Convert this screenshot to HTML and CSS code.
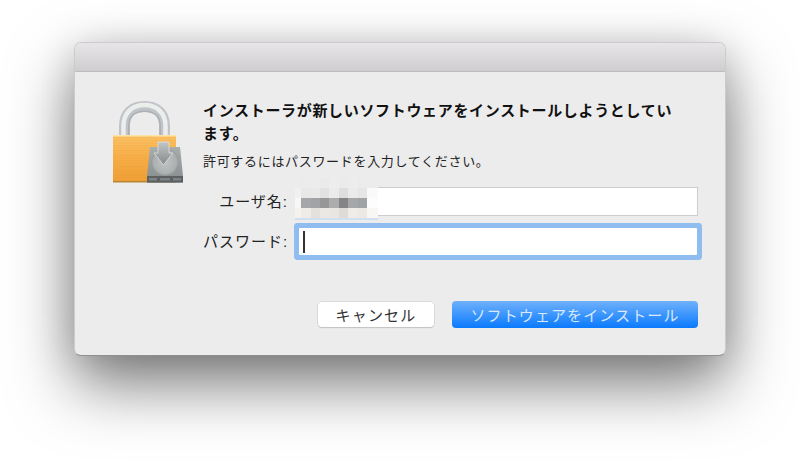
FILE: index.html
```html
<!DOCTYPE html>
<html lang="ja">
<head>
<meta charset="utf-8">
<title>インストーラ</title>
<link rel="stylesheet" href="styles.css">
</head>
<body>
<div class="window">
  <div class="titlebar"></div>
  <div class="content">
    <svg class="lock" width="72" height="86" viewBox="112 99 72 86" aria-hidden="true">
      <defs>
        <linearGradient id="body" x1="0" x2="0" y1="0" y2="1">
          <stop offset="0" stop-color="#fcc263"/>
          <stop offset=".5" stop-color="#f8ae48"/>
          <stop offset="1" stop-color="#ef9f33"/>
        </linearGradient>
        <pattern id="stripes" width="3" height="2.500" patternUnits="userSpaceOnUse">
          <rect width="3" height="1" fill="#d98a25" opacity=".14"/>
        </pattern>
        <linearGradient id="drive" x1="0" x2="0" y1="0" y2="1">
          <stop offset="0" stop-color="#a8adae"/>
          <stop offset="1" stop-color="#878c8e"/>
        </linearGradient>
        <linearGradient id="arrow" x1="0" x2="0" y1="0" y2="1">
          <stop offset="0" stop-color="#c2c5c6"/>
          <stop offset="1" stop-color="#85898a"/>
        </linearGradient>
        <radialGradient id="platter" cx=".5" cy=".5" r=".5">
          <stop offset="0" stop-color="#c0c4c5"/>
          <stop offset=".85" stop-color="#acb0b1"/>
          <stop offset="1" stop-color="#969a9b"/>
        </radialGradient>
        <filter id="soft" x="-10%" y="-10%" width="120%" height="120%">
          <feGaussianBlur stdDeviation=".7"/>
        </filter>
      </defs>
      <g class="shackle" fill="none">
        <path d="M124.500 137V126C124.500 113 133 106.500 144.500 106.500S164.500 113 164.500 126V137" stroke="#c0c3c7" stroke-width="11"/>
        <path d="M123.500 137V126C123.500 112 133 105 144.500 105S165.500 112 165.500 126V137" stroke="#eceded" stroke-width="4.500" filter="url(#soft)"/>
        <path d="M128.800 137V126C128.800 116 135 111.200 144.500 111.200S160.200 116 160.200 126V137" stroke="#acafb3" stroke-width="1.500" filter="url(#soft)"/>
      </g>
      <rect x="113" y="135.500" width="63" height="46.500" rx="1" fill="url(#body)"/>
      <rect x="113" y="135.500" width="63" height="46.500" fill="url(#stripes)"/>
      <rect x="113" y="135" width="63" height="1.500" fill="#fde3a6"/>
      <rect x="113" y="181" width="63" height="1.500" fill="#b98534"/>
      <path d="M150 147H180L183 176V182.500H147V176Z" fill="url(#drive)"/>
      <circle cx="165" cy="162" r="13.500" fill="url(#platter)"/>
      <path d="M147 176H183V182.500H147Z" fill="#5c6061"/>
      <rect x="149" y="178" width="8" height="2.500" fill="#7c8286"/>
      <rect x="160" y="178" width="10" height="2.500" fill="#7c8286"/>
      <rect x="173" y="178" width="8" height="2.500" fill="#7c8286"/>
      <path d="M158 142H169V153H173L163.500 165L154 153H158Z" fill="url(#arrow)" stroke="#dfe1e2" stroke-width=".8"/>
    </svg>
    <div class="main">
      <h1 class="title">インストーラが新しいソフトウェアをインストールしようとしています。</h1>
      <p class="subtitle">許可するにはパスワードを入力してください。</p>
      <div class="form">
        <label class="label">ユーザ名:</label>
        <div class="field">
          <svg class="mosaic" width="83" height="42" viewBox="0 0 83 42" aria-hidden="true">
            <g class="mosaic-cells">
              <rect x="0" y="0" width="83" height="40" fill="#ececec"/>
              <rect x="6" y="0" width="10" height="10" fill="#ebebeb"/><rect x="16" y="0" width="9" height="10" fill="#ececec"/><rect x="25" y="0" width="9" height="10" fill="#eaeaea"/><rect x="34" y="0" width="10" height="10" fill="#ededed"/><rect x="44" y="0" width="9" height="10" fill="#ebebeb"/><rect x="53" y="0" width="10" height="10" fill="#ededed"/><rect x="63" y="0" width="9" height="10" fill="#ebebeb"/><rect x="72" y="0" width="11" height="10" fill="#ececec"/>
              <rect x="0" y="10" width="6" height="10" fill="#f0f0f0"/><rect x="6" y="10" width="10" height="10" fill="#e8e8e8"/><rect x="16" y="10" width="9" height="10" fill="#e9e9e9"/><rect x="25" y="10" width="9" height="10" fill="#e2e2e2"/><rect x="34" y="10" width="10" height="10" fill="#ebebeb"/><rect x="44" y="10" width="9" height="10" fill="#dedede"/><rect x="53" y="10" width="10" height="10" fill="#ebebeb"/><rect x="63" y="10" width="9" height="10" fill="#e6e6e6"/><rect x="72" y="10" width="11" height="10" fill="#fafafa"/>
              <rect x="0" y="20" width="6" height="10" fill="#f6f8f8"/><rect x="6" y="20" width="10" height="10" fill="#a6a6a8"/><rect x="16" y="20" width="9" height="10" fill="#a2a3a6"/><rect x="25" y="20" width="9" height="10" fill="#979797"/><rect x="34" y="20" width="10" height="10" fill="#adadaf"/><rect x="44" y="20" width="9" height="10" fill="#848486"/><rect x="53" y="20" width="10" height="10" fill="#a6a7a9"/><rect x="63" y="20" width="9" height="10" fill="#a0a3a6"/><rect x="72" y="20" width="11" height="10" fill="#fdfdfd"/>
              <rect x="0" y="30" width="6" height="10" fill="#f5f1ec"/><rect x="6" y="30" width="10" height="10" fill="#efebe7"/><rect x="16" y="30" width="9" height="10" fill="#e3e0dd"/><rect x="25" y="30" width="9" height="10" fill="#ebe7e3"/><rect x="34" y="30" width="10" height="10" fill="#e9e5e1"/><rect x="44" y="30" width="9" height="10" fill="#dfdbd7"/><rect x="53" y="30" width="10" height="10" fill="#efebe7"/><rect x="63" y="30" width="9" height="10" fill="#ece8e4"/><rect x="72" y="30" width="11" height="10" fill="#f9f7f4"/>
              <rect x="0" y="40" width="83" height="2" fill="#cfe0f2"/>
            </g>
          </svg>
        </div>
        <label class="label">パスワード:</label>
        <div class="field field-focus"><span class="caret"></span></div>
      </div>
      <div class="buttons">
        <button class="btn btn-cancel">キャンセル</button>
        <button class="btn btn-primary">ソフトウェアをインストール</button>
      </div>
    </div>
  </div>
</div>
</body>
</html>
```

FILE: styles.css
```css
* { box-sizing: border-box; }

html, body { margin: 0; height: 100%; overflow: hidden; background: #fff; }

body {
  padding: 42px 0 0 74px;
  font-family: "Liberation Sans", "Noto Sans CJK JP", sans-serif;
  color: #222;
}

.window {
  width: 652px;
  height: 314px;
  background: #ececec;
  border: 1px solid #cbcbcb;
  border-bottom-color: #8f8f8f;
  border-radius: 7px;
  overflow: hidden;
  box-shadow: 0 28px 64px rgba(0, 0, 0, .52), 0 4px 36px rgba(0, 0, 0, .12);
}

.titlebar {
  height: 29px;
  background: linear-gradient(#e7e5e7, #cfcdcf);
  border-bottom: 1px solid #bdbdbd;
}

.content {
  display: flex;
  padding: 27px 27px 0 37px;
}

.lock { flex: none; margin-right: 19px; }

.main { flex: 1; min-width: 0; }

.title {
  margin: 0;
  width: 480px;
  font-size: 15px;
  line-height: 23px;
  font-weight: 700;
  letter-spacing: .67px;
  color: #111;
}

.subtitle {
  margin: 7px 0 0;
  font-size: 13px;
  line-height: 20px;
  letter-spacing: .68px;
  color: #222;
}

.form {
  display: grid;
  grid-template-columns: 85px 402px;
  column-gap: 8px;
  row-gap: 12px;
  margin-top: 15px;
  align-items: center;
}

.label {
  text-align: right;
  font-size: 15px;
  line-height: 22px;
  letter-spacing: 1px;
  white-space: nowrap;
  color: #222;
}

.field {
  position: relative;
  height: 29px;
  background: #fff;
  border: 1px solid #cdcdcd;
}

.field-focus {
  width: 398px;
  height: 27px;
  margin-left: 3px;
  border: none;
  box-shadow: 0 0 0 5px #8fbdf0;
  border-radius: 1px;
}

.caret {
  position: absolute;
  left: 4px;
  top: 3px;
  width: 2px;
  height: 22px;
  background: #333;
}

.mosaic {
  position: absolute;
  left: -2px;
  top: -10px;
}

.mosaic-cells { filter: blur(.6px); }

.buttons {
  display: flex;
  justify-content: flex-end;
  align-items: center;
  gap: 18px;
  width: 495px;
  margin-top: 46px;
}

.btn {
  border: none;
  padding: 0;
  font-family: inherit;
  font-size: 15px;
  border-radius: 4px;
}

.btn-cancel {
  width: 116px;
  height: 25px;
  background: #fff;
  color: #333;
  letter-spacing: 1.2px;
  box-shadow: 0 0 0 .5px #c9c9c9, 0 1px 1px rgba(0, 0, 0, .2);
}

.btn-primary {
  width: 246px;
  height: 27px;
  background: linear-gradient(#6fb1fb, #0a7afe);
  color: #d9e9fe;
  letter-spacing: 1.1px;
}
```
